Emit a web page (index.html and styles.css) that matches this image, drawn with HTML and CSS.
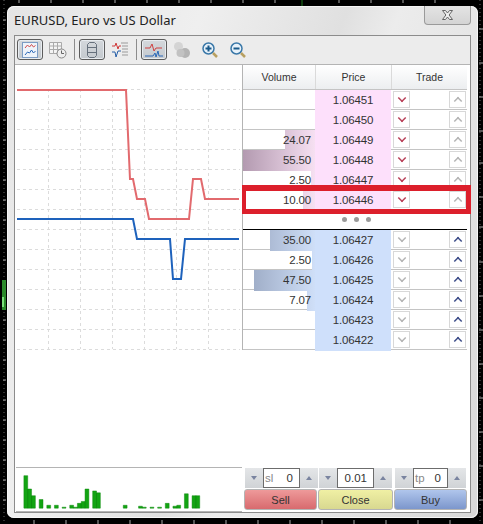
FILE: index.html
```html
<!DOCTYPE html>
<html>
<head>
<meta charset="utf-8">
<title>EURUSD</title>
<link rel="stylesheet" href="styles.css">
</head>
<body>
<svg class="ticks" width="483" height="524" viewBox="0 0 483 524">
  <path d="M4 0V524M480 0V524" class="tick-dots"/>
  <path d="M3 20h3M3 40h3M3 60h3M3 80h3M3 100h3M3 120h3M3 140h3M3 160h3M3 180h3M3 200h3M3 220h3M3 240h3M3 260h3M3 320h3M3 340h3M3 360h3M3 380h3M3 400h3M3 420h3M3 440h3M3 460h3M3 480h3M3 500h3" class="tick-marks"/>
  <path d="M479 29h4M479 63h4M479 97h4M479 131h4M479 163h4M479 197h4M479 227h4M479 262h4M479 296h4M479 330h4M479 364h4M479 398h4M479 432h4M479 466h4M479 500h4" class="tick-marks"/>
  <path d="M34 520v4M66 520v4M98 520v4M130 520v4M162 520v4M194 520v4M226 520v4M258 520v4M290 520v4M322 520v4M354 520v4M386 520v4M418 520v4M450 520v4" class="tick-marks"/>
  <path d="M19 0v3M51 0v3M83 0v3M115 0v3M147 0v3M179 0v3M211 0v3M243 0v3M275 0v3M339 0v3M371 0v3M403 0v3M435 0v3" class="tick-marks"/>
  <path d="M302 0v6" class="tick-green"/>
  <path d="M4 280v30" class="tick-wick"/>
  <path d="M3 307v-10" class="tick-bright"/>
</svg>
<div class="window">
  <div class="titlebar">
    <span class="title">EURUSD, Euro vs US Dollar</span>
    <button class="close" type="button">
      <svg width="13" height="12" viewBox="0 0 13 12"><path d="M1.5 1.5h3l2 2.5 2-2.5h3l-3.4 4.5 3.4 4.5h-3l-2-2.5-2 2.5h-3l3.4-4.5z" fill="#eee" stroke="#666"/></svg>
    </button>
  </div>
  <div class="panel">
    <div class="toolbar">
      <div class="tool on">
        <svg width="16" height="16" viewBox="0 0 16 16"><rect x=".5" y=".5" width="15" height="15" fill="#eef3fa" stroke="#7c9cc4"/><path d="M3 6l2.500-3 2 2 2-2.500 2 2.500 2-1.500" fill="none" stroke="#d24a4a"/><path d="M3 13l2.500-3 2 1 2-3 2 3 2-2" fill="none" stroke="#2a68b8"/></svg>
      </div>
      <div class="tool">
        <svg width="18" height="18" viewBox="0 0 18 18"><path d="M.5 1.5h12v11h-12zM.5 5h12M.5 8.500h12M4.500 1.500v11M8.500 1.500v11" fill="#f4f4f4" stroke="#aaa"/><circle cx="12.500" cy="12.500" r="4.500" fill="#eee" stroke="#888"/><path d="M12.500 9.500v3h2.500" fill="none" stroke="#666"/></svg>
      </div>
      <div class="sep"></div>
      <div class="tool on">
        <svg width="12" height="18" viewBox="0 0 12 18"><path d="M3.500 1.500h5l2 2v11l-2 2h-5l-2-2v-11zM1.500 6.500h9M1.500 11.500h9" fill="none" stroke="#66707c"/></svg>
      </div>
      <div class="tool">
        <svg width="18" height="18" viewBox="0 0 18 18"><path d="M1 5h3l1-3 2 6 1-3h2" fill="none" stroke="#d03a3a"/><path d="M1 11h3l1 5 2-6h3" fill="none" stroke="#2860a8"/><path d="M10 2h7M11 5h6M11 8h6M11 11h6M11 14h6" stroke="#9a9a9a"/></svg>
      </div>
      <div class="sep"></div>
      <div class="tool on">
        <svg width="20" height="18" viewBox="0 0 20 18"><path d="M1 7h5l2-4 2 7 2-3h6" fill="none" stroke="#d04040"/><path d="M1 15h8l2-3 1 4 2-6 1 5h4" fill="none" stroke="#2a68b8"/></svg>
      </div>
      <div class="tool">
        <svg width="18" height="16" viewBox="0 0 18 16"><circle cx="5.500" cy="4.500" r="4.500" fill="#d4d4d4"/><circle cx="12" cy="11" r="5" fill="#b4b4b4"/><circle cx="7.500" cy="11" r="4" fill="#c2c2c2"/></svg>
      </div>
      <div class="tool">
        <svg width="16" height="16" viewBox="0 0 16 16"><circle cx="6.500" cy="6.500" r="5.500" fill="#e8f2fa" stroke="#3a78a8" stroke-width="1.500"/><path d="M3.500 6.500h6M6.500 3.500v6" stroke="#1a5a8a" stroke-width="2"/><path d="M11 11l4 4" stroke="#b8a060" stroke-width="2.500"/></svg>
      </div>
      <div class="tool">
        <svg width="16" height="16" viewBox="0 0 16 16"><circle cx="6.500" cy="6.500" r="5.500" fill="#e8f2fa" stroke="#3a78a8" stroke-width="1.500"/><path d="M3.500 6.500h6" stroke="#1a5a8a" stroke-width="2"/><path d="M11 11l4 4" stroke="#b8a060" stroke-width="2.500"/></svg>
      </div>
    </div>
    <div class="content">
      <div class="charts">
        <svg class="chart" width="226" height="402" viewBox="16 65 226 402">
          <path class="grid" d="M17 89.500H240M17 109.500H240M17 129.500H240M17 149.500H240M17 169.500H240M17 189.500H240M17 209.500H240M17 229.500H240M17 249.500H240M17 269.500H240M17 289.500H240M17 309.500H240M17 329.500H240M17 349.500H240"/>
          <path class="grid" d="M48.500 89V349M80.500 89V349M112.500 89V349M144.500 89V349M176.500 89V349M208.500 89V349"/>
          <path class="ask" d="M17 90H126L130 179H133L137 199H145L149 219H189L193 179H201L205 199H239"/>
          <path class="bid" d="M17 219H133L137 239H170L173 279H181L185 239H239"/>
        </svg>
        <svg class="volume" width="226" height="45" viewBox="16 468 226 45">
          <path class="bar" d="M19 476h4v34h-4zM23 490h4v20h-4zM27 497h4v13h-4zM35 501h4v9h-4zM43 507h4v3h-4zM51 507h4v3h-4zM59 509h4v1h-4zM67 507h4v3h-4zM71 509h4v1h-4zM75 505h4v5h-4zM79 503h4v7h-4zM83 490h4v20h-4zM91 492h4v18h-4zM95 494h4v16h-4zM123 507h4v3h-4zM139 508h4v2h-4zM143 509h4v1h-4zM151 509h4v1h-4zM159 509h4v1h-4zM167 505h4v5h-4zM175 508h4v2h-4zM179 507h4v3h-4zM187 495h4v15h-4zM195 497h4v13h-4zM199 497h4v13h-4z"/>
        </svg>
      </div>
      <div class="side">
        <div class="book">
          <div class="row head"><div>Volume</div><div>Price</div><div>Trade</div></div>
          <div class="row sell"><div class="vol"></div><div class="price">1.06451</div><div class="trade"><span class="arrow dn"></span><span class="arrow up"></span></div></div>
          <div class="row sell"><div class="vol"></div><div class="price">1.06450</div><div class="trade"><span class="arrow dn"></span><span class="arrow up"></span></div></div>
          <div class="row sell"><div class="vol"><i class="fill" style="width:30px"></i><b>24.07</b></div><div class="price">1.06449</div><div class="trade"><span class="arrow dn"></span><span class="arrow up"></span></div></div>
          <div class="row sell"><div class="vol"><i class="fill" style="width:72px"></i><b>55.50</b></div><div class="price">1.06448</div><div class="trade"><span class="arrow dn"></span><span class="arrow up"></span></div></div>
          <div class="row sell"><div class="vol"><i class="fill" style="width:4px"></i><b>2.50</b></div><div class="price">1.06447</div><div class="trade"><span class="arrow dn"></span><span class="arrow up"></span></div></div>
          <div class="row sell last"><div class="vol"><i class="fill" style="width:12px"></i><b>10.00</b></div><div class="price">1.06446</div><div class="trade"><span class="arrow dn"></span><span class="arrow up"></span></div></div>
          <div class="spread"><span></span><span></span><span></span></div>
          <div class="row buy first"><div class="vol"><i class="fill" style="width:45px"></i><b>35.00</b></div><div class="price">1.06427</div><div class="trade"><span class="arrow dn"></span><span class="arrow up"></span></div></div>
          <div class="row buy"><div class="vol"><i class="fill" style="width:3px"></i><b>2.50</b></div><div class="price">1.06426</div><div class="trade"><span class="arrow dn"></span><span class="arrow up"></span></div></div>
          <div class="row buy"><div class="vol"><i class="fill" style="width:61px"></i><b>47.50</b></div><div class="price">1.06425</div><div class="trade"><span class="arrow dn"></span><span class="arrow up"></span></div></div>
          <div class="row buy"><div class="vol"><i class="fill" style="width:8px"></i><b>7.07</b></div><div class="price">1.06424</div><div class="trade"><span class="arrow dn"></span><span class="arrow up"></span></div></div>
          <div class="row buy"><div class="vol"></div><div class="price">1.06423</div><div class="trade"><span class="arrow dn"></span><span class="arrow up"></span></div></div>
          <div class="row buy"><div class="vol"></div><div class="price">1.06422</div><div class="trade"><span class="arrow dn"></span><span class="arrow up"></span></div></div>
          <div class="highlight"></div>
        </div>
        <div class="controls">
          <div class="spinners">
            <div class="spin s1"><span class="sbtn"><em class="tri-d"></em></span><div class="field"><u>sl</u><span>0</span></div><span class="sbtn"><em class="tri-u"></em></span></div>
            <div class="spin s2"><span class="sbtn"><em class="tri-d"></em></span><div class="field"><u></u><span>0.01</span></div><span class="sbtn"><em class="tri-u"></em></span></div>
            <div class="spin s3"><span class="sbtn"><em class="tri-d"></em></span><div class="field"><u>tp</u><span>0</span></div><span class="sbtn"><em class="tri-u"></em></span></div>
          </div>
          <div class="actions">
            <button class="act a-sell" type="button">Sell</button>
            <button class="act a-close" type="button">Close</button>
            <button class="act a-buy" type="button">Buy</button>
          </div>
        </div>
      </div>
    </div>
  </div>
</div>
</body>
</html>
```
FILE: styles.css
```css
* { box-sizing: border-box; }
html, body { margin: 0; height: 524px; overflow: hidden; }
body { background: #000; position: relative; font-family: "Liberation Sans", Arial, sans-serif; font-size: 11px; color: #333; }
.ticks { position: absolute; left: 0; top: 0; }
.tick-dots { stroke: #666; stroke-width: 1; stroke-dasharray: 1 3; fill: none; }
.tick-marks { stroke: #aaa; stroke-width: 1; fill: none; }
.tick-green { stroke: #1c7a1c; stroke-width: 1; fill: none; }
.tick-wick { stroke: #2c8a2c; stroke-width: 4; fill: none; }
.tick-bright { stroke: #7ce07c; stroke-width: 2; fill: none; }

.window { position: relative; margin: 6px 0 0 7px; width: 471px; height: 512px; display: flex; flex-direction: column; border-radius: 7px; background: linear-gradient(110deg, #e4e4e4 0%, #efefef 30%, #e0e0e0 52%, #ececec 60%, #d8d8d8 100%); box-shadow: inset 0 0 0 1px #f6f6f6; }
.titlebar { height: 29px; flex: none; display: flex; align-items: flex-start; padding: 0 7px; }
.title { font-family: "Noto Sans", sans-serif; font-size: 13px; line-height: 28px; color: #222; }
.close { margin-left: auto; width: 47px; height: 19px; padding: 0; border: 1px solid #9a9a9a; border-top: 0; border-radius: 0 0 4px 4px; background: linear-gradient(#e4e4e4, #d4d4d4); display: flex; align-items: center; justify-content: center; }

.panel { flex: none; margin-left: 7px; width: 457px; height: 478px; border: 1px solid #8c8c8c; background: #fff; display: flex; flex-direction: column; }
.toolbar { height: 29px; flex: none; display: flex; align-items: center; gap: 2px; padding: 0 0 1px 2px; background: #ececec; border-bottom: 1px solid #b4b4b4; }
.tool { width: 26px; height: 21px; display: flex; align-items: center; justify-content: center; border-radius: 3px; }
.tool.on { background: linear-gradient(#d4d8dc, #c4c9ce); border: 1px solid #5c5c5c; box-shadow: inset 0 0 0 1px #e8ecf0; }
.sep { width: 1px; height: 21px; margin: 0 2px 0 1px; background: #8c8c8c; }

.content { flex: 1; display: flex; min-height: 0; }
.charts { width: 227px; flex: none; padding-left: 1px; display: flex; flex-direction: column; }
.chart { display: block; flex: none; }
.grid { fill: none; stroke: #dcdcdc; stroke-width: 1; stroke-dasharray: 3 3; }
.ask { fill: none; stroke: #e26a6e; stroke-width: 2; }
.bid { fill: none; stroke: #1e62bc; stroke-width: 2; }
.volume { display: block; flex: none; border-top: 1px solid #b4b4b4; border-bottom: 1px solid #b4b4b4; }
.bar { fill: #12a412; stroke: #0e8a0e; stroke-width: .5; }

.side { flex: 1; display: flex; flex-direction: column; justify-content: space-between; }
.book { position: relative; width: 225px; border-left: 1px solid #b4b4b4; }
.row { display: grid; grid-template-columns: 72px 76px 76px; height: 20px; border-bottom: 1px solid #c4c4c4; line-height: 21px; }
.row.head { height: 25px; line-height: 24px; font-size: 10.5px; text-align: center; background: linear-gradient(#fff, #eceef0); }
.row.head div + div { border-left: 1px solid #dadada; }
.vol { position: relative; text-align: right; padding-right: 4px; font-size: 11.5px; letter-spacing: -.15px; }
.vol b { position: relative; font-weight: normal; }
.fill { position: absolute; right: 0; top: 0; bottom: 0; background-size: 72px 100%; background-position: right top; }
.sell .fill { background-image: linear-gradient(90deg, #b39ab0, #f6e0f2); }
.buy .fill { background-image: linear-gradient(90deg, #98a6c0, #cfdff8); }
.price { text-align: center; font-size: 11.5px; letter-spacing: -.15px; }
.sell .price { background: #fde0fb; }
.buy .price { background: #cfe0fb; }
.trade { display: flex; justify-content: space-between; padding: 1px 1px 0 2px; }
.arrow { width: 17px; height: 17px; border: 1px solid #d8d8d8; background: #fff; position: relative; }
.arrow::after { content: ""; position: absolute; left: 4px; width: 6px; height: 6px; border: solid #b4b4b4; border-width: 2px 2px 0 0; }
.dn::after { top: 2px; transform: rotate(135deg) scale(.75); }
.up::after { top: 5px; transform: rotate(-45deg) scale(.75); }
.sell .dn::after { border-color: #b84058; }
.buy .up::after { border-color: #3c4c88; }
.last { border-bottom: 1px solid #000; }
.first { border-top: 1px solid #000; height: 21px; }
.spread { height: 19px; display: flex; align-items: center; justify-content: center; gap: 7px; padding-left: 3px; }
.spread span { width: 5px; height: 5px; border-radius: 50%; background: #9a9a9a; }
.highlight { position: absolute; left: -1px; top: 120px; width: 229px; height: 29px; border: 5px solid #dc1f2b; border-width: 6px 5px 5px 4px; }

.controls { width: 225px; padding-bottom: 2px; }
.spinners { display: flex; height: 20px; padding-left: 3px; margin-bottom: 1px; }
.spin { display: flex; }
.s1 { width: 73px; margin-right: 1px; }
.s2 { width: 73px; margin-right: 3px; }
.s3 { width: 71px; }
.sbtn { width: 18px; flex: none; background: linear-gradient(#e4e6e8, #d0d3d6); display: flex; align-items: center; justify-content: center; }
.tri-d, .tri-u { width: 0; height: 0; border: 3px solid transparent; }
.tri-d { border-top: 4px solid #7a84a0; border-bottom: 0; }
.tri-u { border-bottom: 4px solid #7a84a0; border-top: 0; }
.field { flex: 1; display: flex; justify-content: space-between; align-items: center; border: 1px solid #6c6c6c; background: #fff; font-size: 11.5px; padding: 0 6px 0 0; }
.field u { text-decoration: none; color: #888; padding-left: 1px; }
.actions { display: flex; gap: 1px; padding-left: 2px; }
.act { height: 21px; padding: 0; font: 11px "Liberation Sans", Arial, sans-serif; color: #333; border: 1px solid #b4b4b4; border-radius: 3px; }
.a-sell { width: 73px; background: linear-gradient(#ee9a9a, #d86a6e); }
.a-close { width: 75px; background: linear-gradient(#f0f0a4, #d8d890); }
.a-buy { width: 73px; background: linear-gradient(#b0c6ec, #7c96cc); }
```
